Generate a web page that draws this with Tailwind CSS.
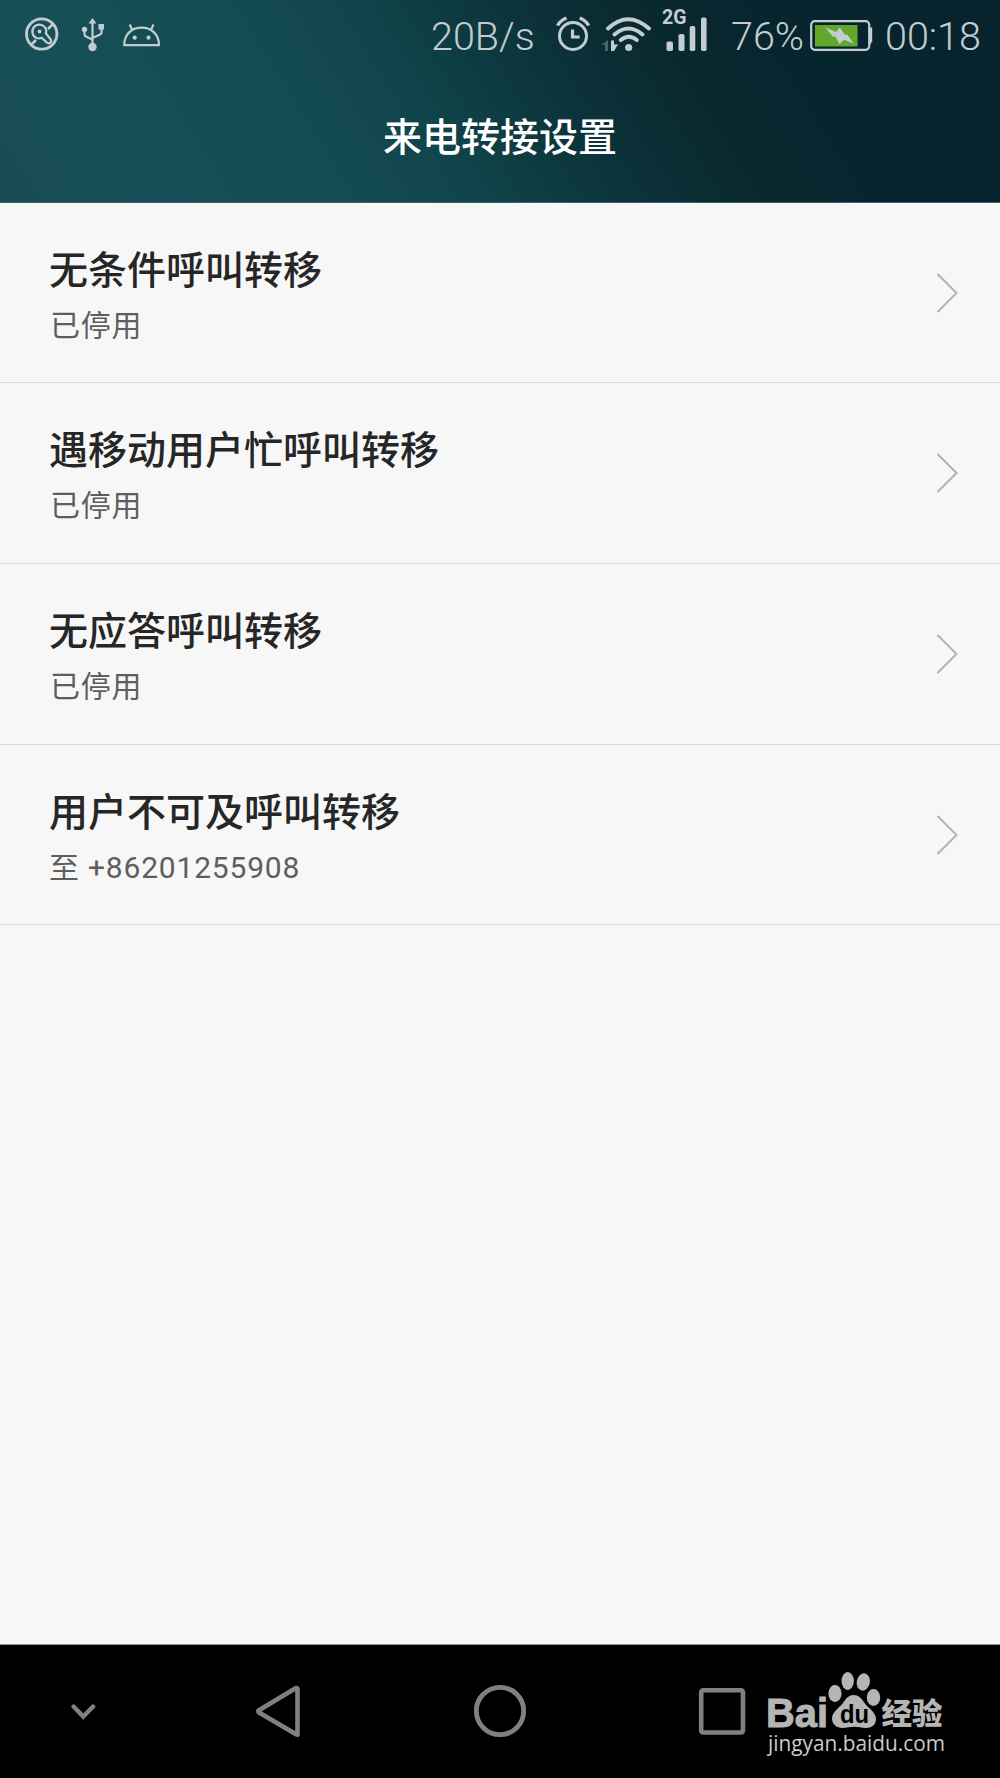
<!DOCTYPE html>
<html lang="zh-CN">
<head>
    <meta charset="UTF-8" />
    <title>来电转接设置</title>
    <script src="https://cdn.jsdelivr.net/npm/@tailwindcss/browser@4"></script>
</head>
<body class="bg-[#f7f7f7] font-['Roboto','Noto_Sans_CJK_SC',sans-serif]">
<div class="w-[1000px] h-[1778px] flex flex-col overflow-hidden">
    <header class="h-[203px] shrink-0 flex flex-col border-b border-[#39626a] bg-[linear-gradient(58deg,#194c52_0%,#174f58_14%,#154c53_30%,#10444a_43%,#0c333b_56%,#09292f_67%,#07252f_78%,#07242e_100%)]">
        <!-- Status bar -->
        <div class="h-[68px] flex items-center text-[#c3cdd0] text-[39.5px] leading-none font-[350]">
            <svg class="ml-[25px] w-[34px] h-[68px] shrink-0" viewBox="25 0 34 68" fill="none" stroke="currentColor">
                <circle cx="41.7" cy="34" r="15.2" stroke-width="2.8"/>
                <path d="M48 29l5-5M31 45l5-5" stroke-width="2.6"/>
                <path d="M36.500 38a7 7 0 1 1 9.700-7.900c.2 1.200 0 2.200-.4 3.200l4.700 6a2.400 2.400 0 0 1-3.600 3.300l-5.200-4.800a7 7 0 0 1-5.200.2z" stroke-width="2.2"/>
                <circle cx="39.500" cy="31.500" r="1.900" fill="currentColor" stroke="none"/>
            </svg>
            <svg class="ml-[22px] w-[26px] h-[68px] shrink-0" viewBox="81 0 26 68" fill="none" stroke="currentColor" stroke-width="2.2">
                <path d="M92.500 22v22M84.500 30v4.500q0 1.500 1.500 2l6.500 3.200M101.500 28v4.500q0 1.500-1.500 2l-7.500 3.500"/>
                <g fill="currentColor" stroke="none">
                    <path d="M92.500 18l4 5.500h-8z"/>
                    <circle cx="84.500" cy="29.500" r="2.700"/>
                    <path d="M98.500 24h5.500v5.500h-5.500z"/>
                    <circle cx="92.500" cy="47" r="4.200"/>
                </g>
            </svg>
            <svg class="ml-[15px] w-[40px] h-[68px] shrink-0" viewBox="122 0 40 68" fill="none" stroke="currentColor" stroke-width="2.2">
                <path d="M124.200 45.200C124.200 34.500 131.500 27.600 141.600 27.600S159 34.500 159 45.200z" stroke-linejoin="round"/>
                <path d="M132.500 30.500l-2.800-6M150.700 30.500l2.800-6"/>
                <circle cx="134.700" cy="37.700" r="2.100" fill="currentColor" stroke="none"/>
                <circle cx="148.500" cy="37.700" r="2.100" fill="currentColor" stroke="none"/>
            </svg>
            <span class="ml-[269px] w-[107px] shrink-0 mt-[5px] whitespace-nowrap">20B/s</span>
            <svg class="ml-[17px] w-[36px] h-[68px] shrink-0" viewBox="555 0 36 68" fill="none" stroke="currentColor">
                <circle cx="573" cy="36" r="13.500" stroke-width="3"/>
                <path d="M572.500 29.500v7.500h7.200" stroke-width="3.200"/>
                <path d="M557.500 25.500q2.800-5 9-7.500M588.700 25.500q-2.800-5-9-7.500" stroke-width="3.400"/>
            </svg>
            <svg class="ml-[9px] w-[52px] h-[68px] shrink-0" viewBox="600 0 52 68" fill="none" stroke="currentColor" stroke-width="4" stroke-linecap="round">
                <path d="M608 28.500q20-18.500 41 0M614.500 34.500q14-12 28 0M620.800 40q8-6.500 16 0"/>
                <circle cx="628.700" cy="47.500" r="3.600" fill="currentColor" stroke="none"/>
                <path d="M608 51h-3v-6H601.500l6.500-5z" fill="#4d6269" stroke="none"/>
                <path d="M611 40.500h3v4h4l-4 6.500h-3z" fill="currentColor" stroke="none"/>
            </svg>
            <svg class="ml-[8px] w-[50px] h-[68px] shrink-0" viewBox="660 0 50 68" fill="currentColor">
                <text x="662" y="24" font-size="19.500" font-weight="700" textLength="24.500" lengthAdjust="spacingAndGlyphs">2G</text>
                <rect x="666.500" y="41.500" width="6.500" height="9.500" rx="1.800"/>
                <rect x="678.500" y="34" width="6" height="17" rx="1.800"/>
                <rect x="689.700" y="26" width="5.600" height="25" rx="1.800"/>
                <rect x="701" y="17.500" width="5.600" height="33.500" rx="1.800"/>
            </svg>
            <span class="ml-[21px] w-[73px] shrink-0 mt-[5px] whitespace-nowrap">76%</span>
            <svg class="ml-[6px] w-[64px] h-[68px] shrink-0" viewBox="810 0 64 68">
                <rect x="811.200" y="21.200" width="58" height="28.600" rx="3.500" fill="none" stroke="currentColor" stroke-width="2.200"/>
                <path d="M869 27.500h3.200v3V42h-1v2.300H869z" fill="currentColor"/>
                <rect x="815" y="25" width="42.500" height="21.500" fill="#62a72b"/>
                <path d="M825.500 27.500l10.500 4.500 3.800-4.500 5.200 7.500 2-.8 7 9.500-10-4-4.500 4.500-4.300-8-2 .8z" fill="currentColor"/>
            </svg>
            <span class="ml-[11px] mt-[5px] whitespace-nowrap">00:18</span>
        </div>
        <h1 class="h-[134px] flex justify-center pt-[41px] text-white text-[39px] leading-[58px] font-medium">来电转接设置</h1>
    </header>

    <main class="flex-1 text-[#262626]">
        <a class="h-[180px] border-b border-[#d9d9d9] flex items-center justify-between pl-[49px] pr-[42px]">
            <div class="pt-[8px]">
                <h2 class="text-[39px] leading-[58px] font-medium">无条件呼叫转移</h2>
                <p class="pl-px text-[30px] leading-[52px] tracking-[0.7px] text-[#5e5e5e]">已停用</p>
            </div>
            <svg class="w-[22px] h-[42px]" viewBox="0 0 22 42" fill="none" stroke="#b2b2b2" stroke-width="2"><path d="M1.500 2l19 19-19 19"/></svg>
        </a>
        <a class="h-[181px] border-b border-[#d9d9d9] flex items-center justify-between pl-[49px] pr-[42px]">
            <div class="pt-[8px]">
                <h2 class="text-[39px] leading-[58px] font-medium">遇移动用户忙呼叫转移</h2>
                <p class="pl-px text-[30px] leading-[52px] tracking-[0.7px] text-[#5e5e5e]">已停用</p>
            </div>
            <svg class="w-[22px] h-[42px]" viewBox="0 0 22 42" fill="none" stroke="#b2b2b2" stroke-width="2"><path d="M1.500 2l19 19-19 19"/></svg>
        </a>
        <a class="h-[181px] border-b border-[#d9d9d9] flex items-center justify-between pl-[49px] pr-[42px]">
            <div class="pt-[8px]">
                <h2 class="text-[39px] leading-[58px] font-medium">无应答呼叫转移</h2>
                <p class="pl-px text-[30px] leading-[52px] tracking-[0.7px] text-[#5e5e5e]">已停用</p>
            </div>
            <svg class="w-[22px] h-[42px]" viewBox="0 0 22 42" fill="none" stroke="#b2b2b2" stroke-width="2"><path d="M1.500 2l19 19-19 19"/></svg>
        </a>
        <a class="h-[180px] border-b border-[#d9d9d9] flex items-center justify-between pl-[49px] pr-[42px]">
            <div class="pt-[8px]">
                <h2 class="text-[39px] leading-[58px] font-medium">用户不可及呼叫转移</h2>
                <p class="text-[30px] leading-[52px] tracking-[0.8px] text-[#5e5e5e]">至 +86201255908</p>
            </div>
            <svg class="w-[22px] h-[42px]" viewBox="0 0 22 42" fill="none" stroke="#b2b2b2" stroke-width="2"><path d="M1.500 2l19 19-19 19"/></svg>
        </a>
    </main>

    <!-- Navigation bar -->
    <nav class="h-[134px] shrink-0 bg-black border-t border-[#8f9696] flex items-center text-[#808080]">
        <svg class="ml-[69px] w-[28px] h-[133px]" viewBox="69 1645 28 133" fill="none" stroke="currentColor" stroke-width="4.400" stroke-linecap="round"><path d="M73.500 1706.500l9.800 10 9.800-10"/></svg>
        <svg class="ml-[157px] w-[48px] h-[133px]" viewBox="254 1645 48 133" fill="none" stroke="currentColor" stroke-width="4.600" stroke-linejoin="round"><path d="M297.500 1689v45.500q0 .5-1 0L259 1712.500q-1.500-1.200 0-2.300l36.500-22q2-.5 2 .8z"/></svg>
        <svg class="ml-[170px] w-[56px] h-[133px]" viewBox="472 1645 56 133" fill="none" stroke="currentColor" stroke-width="4.800"><circle cx="500" cy="1711" r="23.700"/></svg>
        <svg class="ml-[169px] w-[50px] h-[133px]" viewBox="697 1645 50 133" fill="none" stroke="currentColor" stroke-width="4.600"><rect x="701.200" y="1690.200" width="41.800" height="42.300" rx="2"/></svg>
        <!-- Baidu Jingyan mark -->
        <svg class="ml-[15px] w-[190px] h-[133px]" viewBox="762 1645 190 133" fill="#b5b5b5">
            <text x="766" y="1727" font-family="Liberation Sans" font-size="40" font-weight="700" stroke="#b5b5b5" stroke-width="1" textLength="62" lengthAdjust="spacingAndGlyphs">Bai</text>
            <ellipse cx="835" cy="1693.500" rx="6.600" ry="8.500"/>
            <ellipse cx="847.700" cy="1681" rx="6.200" ry="9"/>
            <ellipse cx="863.300" cy="1682" rx="6.600" ry="8.700" transform="rotate(12 863.300 1682)"/>
            <ellipse cx="873.500" cy="1697.500" rx="6.700" ry="8.500"/>
            <path d="M853.500 1695c5 0 8 3 11 8 3 4.500 11.500 9 11.500 16 0 6-4.500 9-10 9-4.500 0-8-1.200-12-1.200s-7.500 1.200-11.500 1.200c-6 0-10.500-4-10.500-9.500 0-7 8-11 11-15.500 3.200-5 6-8 10.500-8z"/>
            <text x="840" y="1722.500" font-family="Liberation Sans" font-size="25" font-weight="700" fill="#000" textLength="29" lengthAdjust="spacingAndGlyphs">du</text>
            <text x="881.500" y="1724" font-family="Noto Sans CJK SC" font-size="30" font-weight="900" textLength="61" lengthAdjust="spacingAndGlyphs">经验</text>
            <text x="768" y="1750.500" font-family="Open Sans" font-size="21" font-weight="500" fill="#cacaca" textLength="177" lengthAdjust="spacingAndGlyphs">jingyan.baidu.com</text>
        </svg>
    </nav>
</div>
</body>
</html>
